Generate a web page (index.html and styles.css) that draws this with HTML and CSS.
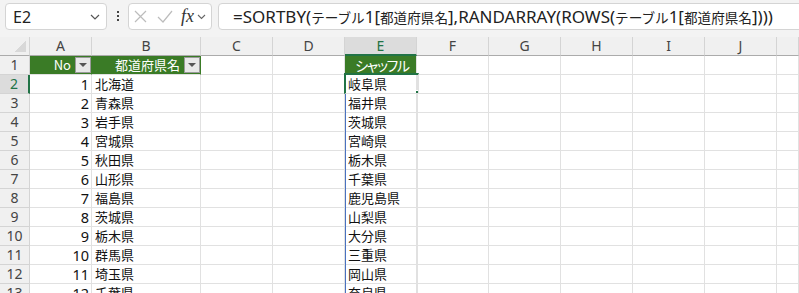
FILE: index.html
```html
<!DOCTYPE html>
<html lang="ja">
<head>
  <meta charset="UTF-8">
  <title>SORTBY RANDARRAY</title>
  <link rel="stylesheet" href="styles.css">
</head>
<body>
  <div class="toolbar">
    <div class="namebox">
      <span>E2</span>
      <svg width="10" height="6" viewBox="0 0 10 6"><path d="M1 1l4 4 4-4" fill="none" stroke="#555" stroke-width="1.2"/></svg>
    </div>
    <div class="dots"><i></i><i></i><i></i></div>
    <div class="fxbox">
      <svg class="x" width="13" height="13" viewBox="0 0 13 13"><path d="M1 1l11 11M12 1L1 12" fill="none" stroke="#bcbcbc" stroke-width="1.2"/></svg>
      <svg class="ok" width="16" height="13" viewBox="0 0 16 13"><path d="M1 7l5 5L15 1" fill="none" stroke="#bcbcbc" stroke-width="1.2"/></svg>
      <span class="fx">fx</span>
      <svg width="9" height="6" viewBox="0 0 9 6"><path d="M1 1l3.5 3.5L8 1" fill="none" stroke="#666" stroke-width="1.1"/></svg>
    </div>
    <div class="formula">=SORTBY(<span class="jp">テーブル</span>1[<span class="jp">都道府県名</span>],RANDARRAY(ROWS(<span class="jp">テーブル</span>1[<span class="jp">都道府県名</span>])))</div>
  </div>

  <div class="grid">
    <div class="corner"></div><div class="ch">A</div><div class="ch">B</div><div class="ch">C</div><div class="ch">D</div><div class="ch sel">E</div><div class="ch">F</div><div class="ch">G</div><div class="ch">H</div><div class="ch">I</div><div class="ch">J</div><div class="ch"></div>

    <div class="rh">1</div><div class="th">No<span class="filter"></span></div><div class="th">都道府県名<span class="filter"></span></div><div></div><div></div><div class="th mid">シャッフル</div><div></div><div></div><div></div><div></div><div></div><div></div>
    <div class="rh sel">2</div><div class="num">1</div><div>北海道</div><div></div><div></div><div>岐阜県</div><div></div><div></div><div></div><div></div><div></div><div></div>
    <div class="rh">3</div><div class="num">2</div><div>青森県</div><div></div><div></div><div>福井県</div><div></div><div></div><div></div><div></div><div></div><div></div>
    <div class="rh">4</div><div class="num">3</div><div>岩手県</div><div></div><div></div><div>茨城県</div><div></div><div></div><div></div><div></div><div></div><div></div>
    <div class="rh">5</div><div class="num">4</div><div>宮城県</div><div></div><div></div><div>宮崎県</div><div></div><div></div><div></div><div></div><div></div><div></div>
    <div class="rh">6</div><div class="num">5</div><div>秋田県</div><div></div><div></div><div>栃木県</div><div></div><div></div><div></div><div></div><div></div><div></div>
    <div class="rh">7</div><div class="num">6</div><div>山形県</div><div></div><div></div><div>千葉県</div><div></div><div></div><div></div><div></div><div></div><div></div>
    <div class="rh">8</div><div class="num">7</div><div>福島県</div><div></div><div></div><div>鹿児島県</div><div></div><div></div><div></div><div></div><div></div><div></div>
    <div class="rh">9</div><div class="num">8</div><div>茨城県</div><div></div><div></div><div>山梨県</div><div></div><div></div><div></div><div></div><div></div><div></div>
    <div class="rh">10</div><div class="num">9</div><div>栃木県</div><div></div><div></div><div>大分県</div><div></div><div></div><div></div><div></div><div></div><div></div>
    <div class="rh">11</div><div class="num">10</div><div>群馬県</div><div></div><div></div><div>三重県</div><div></div><div></div><div></div><div></div><div></div><div></div>
    <div class="rh">12</div><div class="num">11</div><div>埼玉県</div><div></div><div></div><div>岡山県</div><div></div><div></div><div></div><div></div><div></div><div></div>
    <div class="rh">13</div><div class="num">12</div><div>千葉県</div><div></div><div></div><div>奈良県</div><div></div><div></div><div></div><div></div><div></div><div></div>

    <div class="spill"></div>
    <div class="cursor"><span class="handle"></span></div>
  </div>
</body>
</html>
```

FILE: styles.css
```css
body {
  margin: 0;
  background: #f3f3f3;
  font-family: "Noto Sans", "Noto Sans CJK JP", sans-serif;
  color: #222;
  overflow: hidden;
}
.toolbar {
  display: flex;
  align-items: flex-start;
  height: 37px;
  padding-top: 3px;
  box-sizing: border-box;
}
.namebox, .fxbox, .formula {
  height: 27px;
  box-sizing: border-box;
  background: white;
  border: 1px solid #d4d4d4;
  border-radius: 4px;
  display: flex;
  align-items: center;
}
.namebox {
  margin-left: 5px;
  width: 102px;
  padding: 0 6px 0 7px;
  justify-content: space-between;
  font-size: 16px;
}
.dots {
  width: 21px;
  display: flex;
  flex-direction: column;
  align-items: center;
  gap: 2px;
  padding-top: 8px;
}
.dots i {
  width: 2px;
  height: 2px;
  background: #444;
}
.fxbox {
  width: 84px;
  padding-left: 5px;
}
.fxbox .ok {
  margin-left: 10px;
}
.fxbox .fx {
  margin-left: 8px;
  margin-right: 3px;
  font-family: "Liberation Serif", serif;
  font-style: italic;
  font-size: 18px;
  color: #333;
}
.formula {
  flex: 1;
  margin-left: 6px;
  margin-right: -10px;
  padding-left: 14px;
  font-size: 17px;
  white-space: nowrap;
  overflow: hidden;
}
.jp {
  font-family: "Noto Sans CJK JP", sans-serif;
  font-size: 13.6px;
}

.grid {
  position: relative;
  display: grid;
  grid-template-columns: 30px 62px 109px repeat(8, 72px) 1fr;
  grid-auto-rows: 19px;
  background: white;
}
.grid > div {
  box-sizing: border-box;
  border-right: 1px solid #e1e1e1;
  border-bottom: 1px solid #e1e1e1;
  padding: 0 3px;
  font-family: "Noto Sans CJK JP", sans-serif;
  font-size: 13px;
  line-height: 18px;
  color: #111;
  white-space: nowrap;
  overflow: hidden;
}
.grid > .corner {
  background: linear-gradient(135deg, transparent 50%, #d8d8d8 50%) no-repeat right 3px bottom 3px / 12px 11px, #f0f0f0;
  border-bottom-color: #ababab;
  border-right-color: #d4d4d4;
}
.grid > .ch, .grid > .rh {
  background: #f0f0f0;
  font-family: "Noto Sans", sans-serif;
  font-size: 14px;
  color: #444;
  text-align: center;
  border-right-color: #d4d4d4;
}
.grid > .ch {
  border-bottom-color: #ababab;
}
.grid > .rh {
  border-bottom-color: #d4d4d4;
  padding: 0;
}
.grid > .ch.sel {
  background: #dcdcdc;
  color: #217346;
  border-bottom: 2px solid #217346;
}
.grid > .rh.sel {
  background: #dcdcdc;
  color: #217346;
  border-right: 2px solid #217346;
}
.grid > .num {
  text-align: right;
  padding-right: 2px;
  font-family: "Noto Sans", sans-serif;
  font-size: 14.5px;
}
.grid > .th {
  background: #3a7b26;
  color: white;
  display: flex;
  justify-content: flex-end;
  align-items: center;
  padding-right: 0;
  border-right-color: #3a7b26;
}
.grid > .th:first-of-type {
  font-family: "Noto Sans", sans-serif;
}
.grid > .th.mid {
  justify-content: center;
  font-size: 14px;
  font-feature-settings: "palt";
  letter-spacing: -1.3px;
  border-right-color: #e1e1e1;
}
.filter {
  width: 16px;
  height: 16px;
  margin-left: 4px;
  box-sizing: border-box;
  border: 1px solid #9a9a9a;
  background: #e8e8e8;
  display: flex;
  align-items: center;
  justify-content: center;
}
.filter::after {
  content: "";
  border-left: 4px solid transparent;
  border-right: 4px solid transparent;
  border-top: 4px solid #555;
}
.spill {
  position: absolute;
  left: 345px;
  top: 38px;
  width: 73px;
  bottom: 0;
  box-sizing: border-box;
  border-left: 1px solid #4a72c0;
  border-right: 1px solid #4a72c0;
}
.cursor {
  position: absolute;
  left: 344px;
  top: 36px;
  width: 75px;
  height: 21px;
  box-sizing: border-box;
  border: 2px solid #217346;
}
.handle {
  position: absolute;
  right: -5px;
  bottom: -5px;
  width: 6px;
  height: 6px;
  background: #217346;
  border: 1px solid white;
}
```
